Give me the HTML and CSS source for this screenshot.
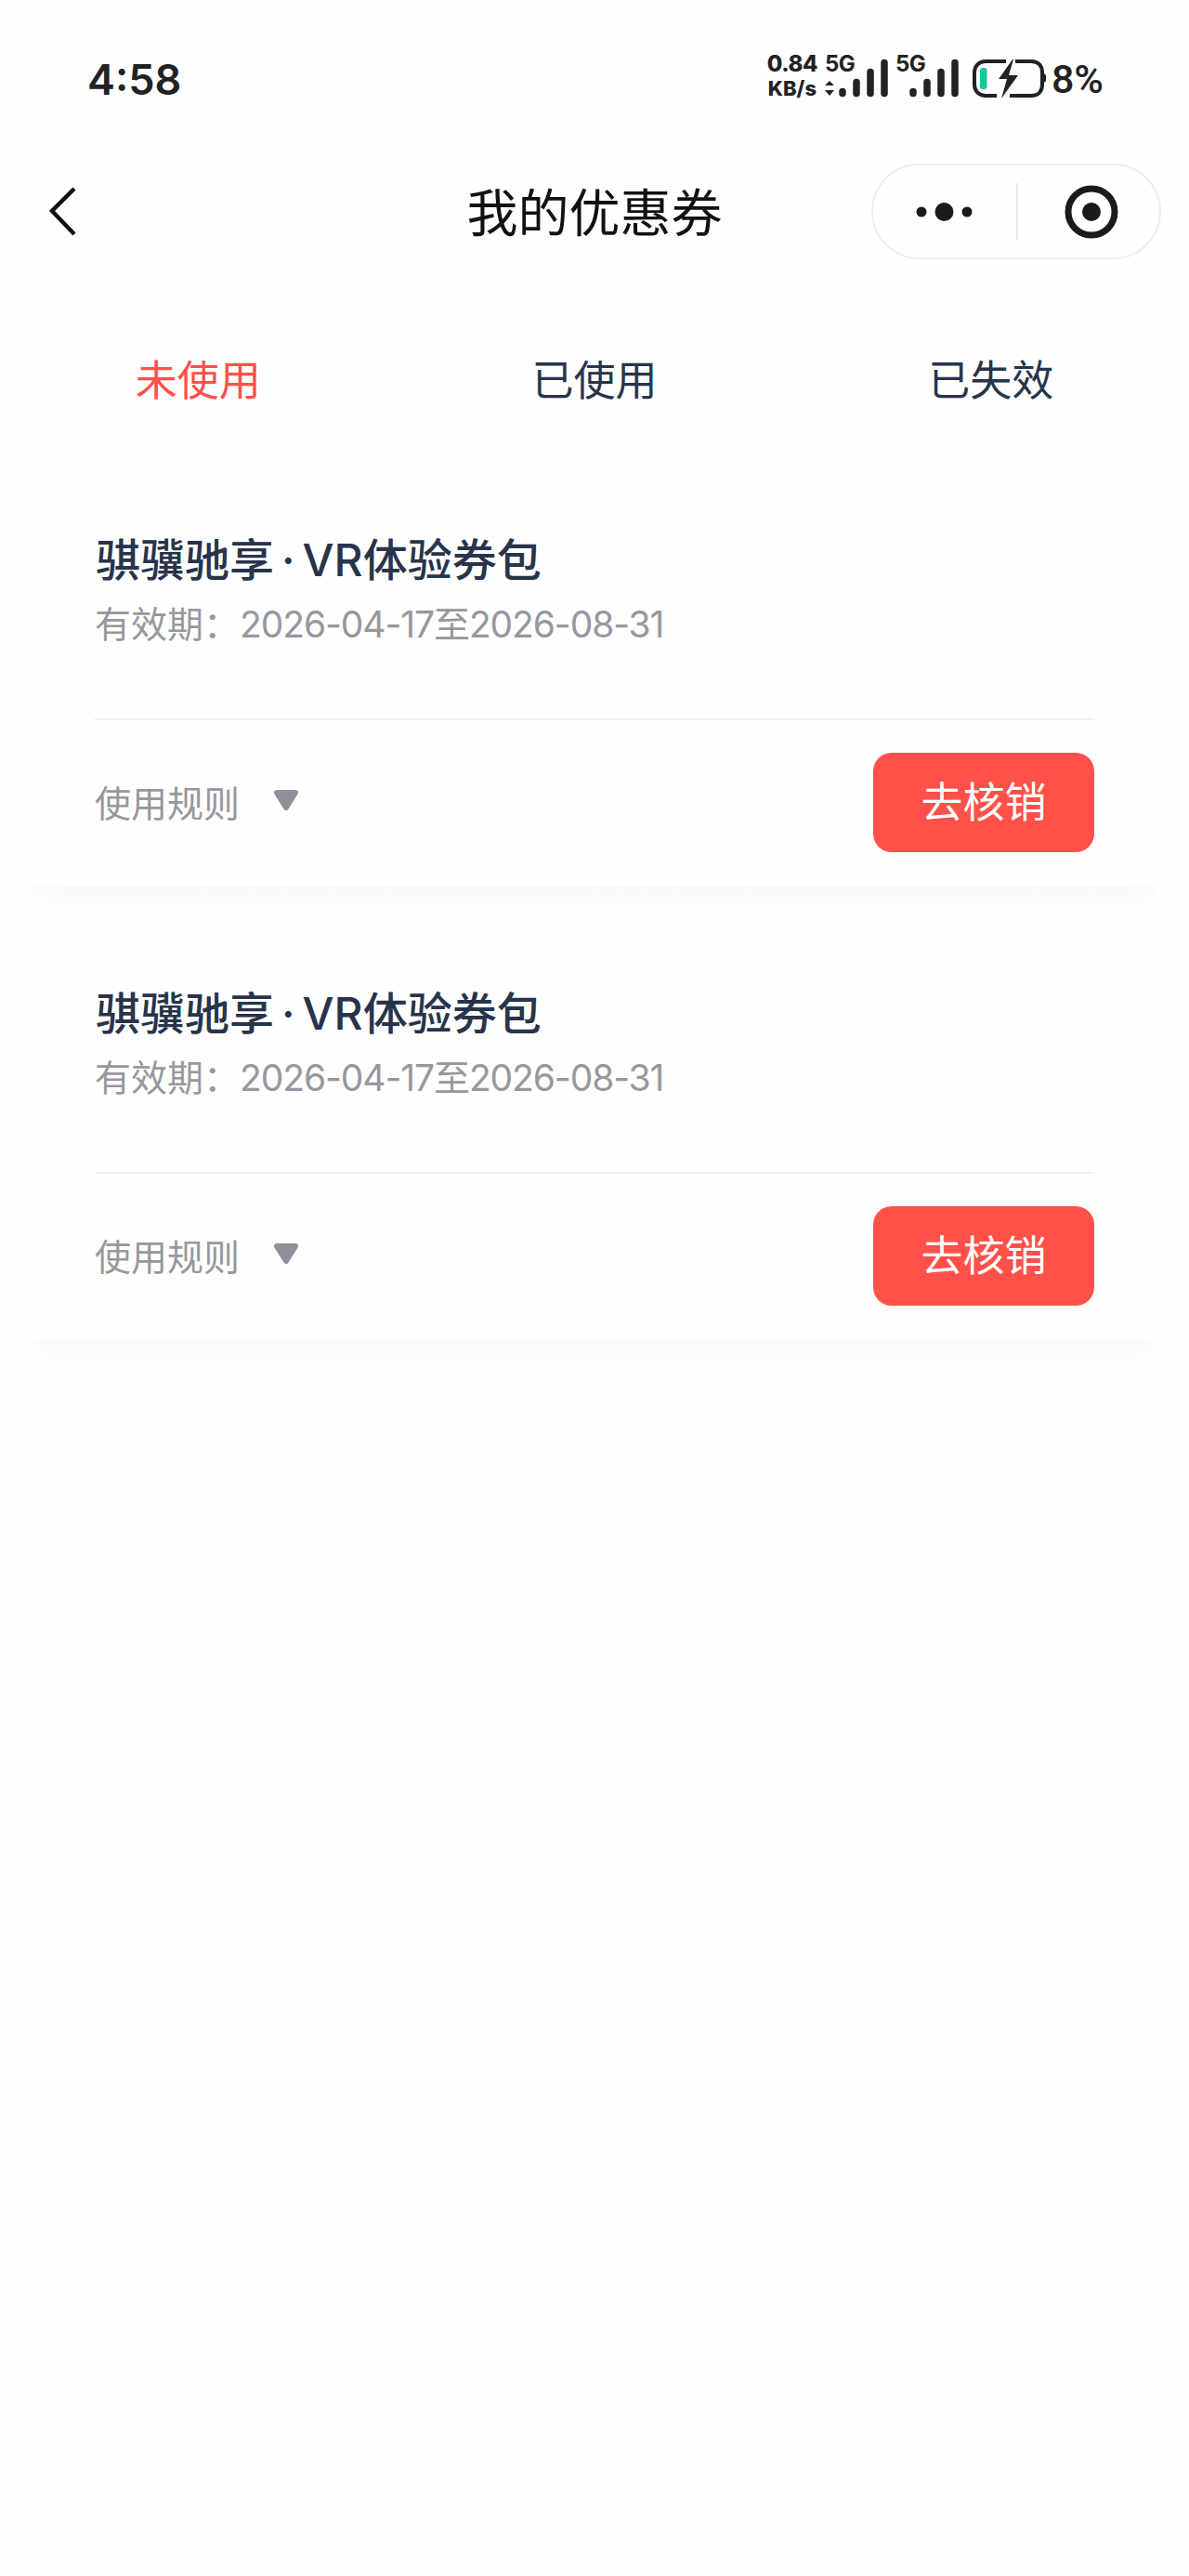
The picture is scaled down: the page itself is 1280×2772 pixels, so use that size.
FILE: index.html
```html
<!DOCTYPE html>
<html lang="zh">
<head>
    <meta charset="UTF-8">
    <title>我的优惠券</title>
    <link rel="stylesheet" href="styles.css">
</head>
<body>

<div class="statusbar">
    <span class="time">4:58</span>
    <div class="status-right">
        <div class="speed"><span>0.84</span><span class="speed-unit">KB/s</span></div>
        <div class="signal">
            <span class="net">5G</span>
            <svg width="68" height="46" viewBox="0 0 68 46">
                <path d="M5 25l5 5H0z M0 35h10l-5 6z" fill="#222"/>
                <g stroke="#222" stroke-width="7.500" stroke-linecap="round">
                    <path d="M19 36.500v2"/><path d="M34 26.500v12"/><path d="M49 15.500v23"/><path d="M64 5.500v33"/>
                </g>
            </svg>
        </div>
        <div class="signal">
            <span class="net">5G</span>
            <svg width="68" height="46" viewBox="0 0 68 46">
                <g stroke="#222" stroke-width="7.500" stroke-linecap="round">
                    <path d="M19 36.500v2"/><path d="M34 26.500v12"/><path d="M49 15.500v23"/><path d="M64 5.500v33"/>
                </g>
            </svg>
        </div>
        <svg class="battery" width="80" height="46" viewBox="0 0 80 46">
            <path d="M36 4H14C7 4 2 9 2 16v13c0 7 5 12 12 12h12" fill="none" stroke="#222" stroke-width="4"/>
            <path d="M46 4h17c8 0 12 5 12 12v13c0 7-4 12-12 12H40" fill="none" stroke="#222" stroke-width="4"/>
            <path d="M76 16l3 3v6l-3 3z" fill="#222"/>
            <rect x="8" y="11" width="7.500" height="23" rx="3" fill="#17c79a"/>
            <path d="M43 2L28 23h9l-6 21 18-25H39l5-17z" fill="#222"/>
        </svg>
        <span class="battery-num">8%</span>
    </div>
</div>

<div class="navbar">
    <svg class="back" width="30" height="56" viewBox="0 0 30 56">
        <path d="M27 3L3 27l24 25" fill="none" stroke="#111" stroke-width="4.500"/>
    </svg>
    <div class="nav-title">我的优惠券</div>
    <div class="capsule">
        <svg class="capsule-more" width="154" height="30" viewBox="0 0 154 30">
            <circle cx="52" cy="15" r="5.500" fill="#1a1a1a"/>
            <circle cx="76.500" cy="15" r="10" fill="#1a1a1a"/>
            <circle cx="101" cy="15" r="5.500" fill="#1a1a1a"/>
        </svg>
        <div class="capsule-line"></div>
        <svg class="capsule-target" width="152" height="62" viewBox="0 0 152 62">
            <circle cx="79" cy="31" r="25" fill="none" stroke="#1a1a1a" stroke-width="7"/>
            <circle cx="79" cy="31" r="10" fill="#1a1a1a"/>
        </svg>
    </div>
</div>

<div class="tabs">
    <div class="tab tab-on">未使用</div>
    <div class="tab">已使用</div>
    <div class="tab">已失效</div>
</div>

<div class="list">
    <div class="card">
        <div class="card-top">
            <div class="card-title">骐骥驰享<span class="dot">·</span>VR体验券包</div>
            <div class="card-date">有效期：<span class="date-num">2026-04-17至2026-08-31</span></div>
        </div>
        <div class="card-foot">
            <div class="rule"><span class="rule-text">使用规则</span>
                <svg class="rule-arrow" width="30" height="26" viewBox="0 0 30 26">
                    <path d="M5 5h20L15 21z" fill="#8e9199" stroke="#8e9199" stroke-width="6" stroke-linejoin="round"/>
                </svg>
            </div>
            <div class="btn">去核销</div>
        </div>
    </div>
    <div class="card-shadow"></div>

    <div class="card">
        <div class="card-top">
            <div class="card-title">骐骥驰享<span class="dot">·</span>VR体验券包</div>
            <div class="card-date">有效期：<span class="date-num">2026-04-17至2026-08-31</span></div>
        </div>
        <div class="card-foot">
            <div class="rule"><span class="rule-text">使用规则</span>
                <svg class="rule-arrow" width="30" height="26" viewBox="0 0 30 26">
                    <path d="M5 5h20L15 21z" fill="#8e9199" stroke="#8e9199" stroke-width="6" stroke-linejoin="round"/>
                </svg>
            </div>
            <div class="btn">去核销</div>
        </div>
    </div>
    <div class="card-shadow"></div>
</div>

</body>
</html>
```

FILE: styles.css
```css
body {
    margin: 0;
    background: #fefefe;
    font-family: "Inter", "Noto Sans CJK SC", sans-serif;
    color: #28344a;
}

/* status bar */
.statusbar {
    height: 170px;
    display: flex;
    justify-content: space-between;
    align-items: center;
    padding: 0 92px 0 94px;
    box-sizing: border-box;
    color: #222;
}
.time {
    font-size: 45px;
    font-weight: 600;
}
.status-right {
    display: flex;
    align-items: flex-start;
    height: 46px;
}
.speed {
    display: flex;
    flex-direction: column;
    align-items: center;
    width: 54px;
    margin: -7px 8px 0 0;
    font-size: 24px;
    line-height: 27px;
    font-weight: 800;
    letter-spacing: -0.5px;
}
.speed-unit {
    font-size: 22px;
    letter-spacing: 0;
}
.signal {
    position: relative;
    width: 68px;
    height: 46px;
    margin-right: 8px;
}
.signal svg {
    display: block;
}
.net {
    position: absolute;
    left: 0;
    top: -6px;
    font-size: 24px;
    line-height: 26px;
    font-weight: 700;
    letter-spacing: -0.5px;
}
.battery {
    margin-left: 7px;
}
.battery-num {
    margin-left: 5px;
    font-family: "Roboto", sans-serif;
    font-size: 43px;
    line-height: 46px;
    font-weight: 500;
}

/* nav */
.navbar {
    height: 116px;
    display: flex;
    align-items: center;
    justify-content: center;
    position: relative;
}
.nav-title {
    font-size: 55px;
    color: #111;
    font-weight: 400;
    margin-top: -6px;
}
.back {
    position: absolute;
    left: 53px;
    top: 30px;
}
.capsule {
    position: absolute;
    left: 938px;
    top: 6px;
    width: 312px;
    height: 103px;
    box-sizing: border-box;
    border: 2px solid #eeeeee;
    border-radius: 52px;
    display: flex;
    align-items: center;
}
.capsule svg {
    flex: none;
}
.capsule-line {
    width: 2px;
    height: 62px;
    background: #ececec;
    flex: none;
}

/* tabs */
.tabs {
    display: flex;
    height: 116px;
    margin-top: 62px;
    margin-bottom: 33px;
    align-items: center;
}
.tab {
    flex: 1;
    text-align: center;
    font-size: 45px;
    color: #28344a;
}
.tab-on {
    color: #ff5049;
}

/* coupon cards */
.list {
    margin: 0 34px;
}
.card {
    height: 456px;
    padding: 0 68px;
    box-sizing: border-box;
    display: flex;
    flex-direction: column;
}
.card-top {
    height: 278px;
    padding-top: 73px;
    box-sizing: border-box;
    border-bottom: 2px solid #f1f1f3;
}
.card-title {
    font-size: 48px;
    line-height: 66px;
    font-weight: 500;
    color: #28344a;
    margin-left: 1px;
}
.dot {
    margin: 0 8px;
}
.card-date {
    margin-top: 9px;
    font-size: 39px;
    line-height: 54px;
    color: #97989d;
}
.date-num {
    letter-spacing: -1.1px;
}
.card-foot {
    flex: 1;
    display: flex;
    justify-content: space-between;
    padding-top: 35px;
}
.rule {
    display: flex;
    align-items: center;
    height: 107px;
    font-size: 39px;
    color: #97989d;
}
.rule-text {
    margin-top: -4px;
}
.rule-arrow {
    margin-left: 35px;
    margin-top: -6px;
}
.btn {
    width: 238px;
    height: 107px;
    background: #ff5049;
    border-radius: 20px;
    color: #fff;
    font-size: 45px;
    line-height: 107px;
    text-align: center;
}
/* the soft band under each card, it fades a little at the two ends */
.card-shadow {
    height: 32px;
    background:
        linear-gradient(to right, rgba(254, 254, 254, 0.6), rgba(254, 254, 254, 0) 36px, rgba(254, 254, 254, 0) calc(100% - 36px), rgba(254, 254, 254, 0.6)),
        linear-gradient(#f8f9fc, #fefefe);
}
```
